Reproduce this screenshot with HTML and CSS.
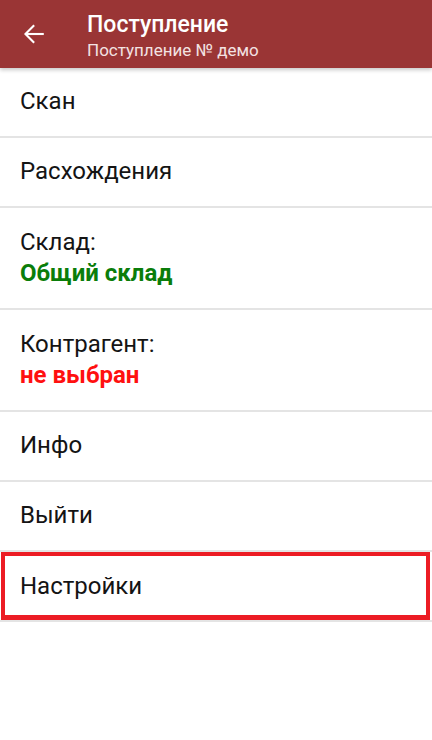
FILE: index.html
```html
<!DOCTYPE html>
<html lang="ru">
<head>
<meta charset="utf-8">
<title>Поступление</title>
<link rel="stylesheet" href="styles.css">
</head>
<body>
<div class="screen">
  <header class="appbar">
    <button class="back" aria-label="Назад">
      <svg width="28" height="28" viewBox="0 0 24 24" fill="none" stroke="#ffffff" stroke-width="1.8" stroke-linecap="square">
        <path d="M19.5 12H5.2"/>
        <path d="M11.5 5.2L4.7 12l6.8 6.8"/>
      </svg>
    </button>
    <div class="titles">
      <div class="title">Поступление</div>
      <div class="subtitle">Поступление № демо</div>
    </div>
  </header>
  <ul class="menu">
    <li class="item">Скан</li>
    <li class="item">Расхождения</li>
    <li class="item item-tall">
      <span>Склад:</span>
      <span class="value value-ok">Общий склад</span>
    </li>
    <li class="item item-tall">
      <span>Контрагент:</span>
      <span class="value value-missing">не выбран</span>
    </li>
    <li class="item">Инфо</li>
    <li class="item">Выйти</li>
    <li class="item item-selected">Настройки</li>
  </ul>
</div>
</body>
</html>
```

FILE: styles.css
```css
* {
  box-sizing: border-box;
}

html, body {
  margin: 0;
  padding: 0;
  background: #ffffff;
}

body {
  font-family: Roboto, "Noto Sans", sans-serif;
  color: #111111;
}

.screen {
  width: 432px;
  min-height: 740px;
  display: flex;
  flex-direction: column;
}

.appbar {
  position: relative;
  z-index: 1;
  height: 68px;
  background: #9a3535;
  display: flex;
  align-items: flex-start;
  box-shadow: 0 2px 4px rgba(0, 0, 0, 0.22);
}

.back {
  margin: 20px 0 0 20px;
  padding: 0;
  width: 28px;
  height: 28px;
  border: none;
  background: none;
  display: flex;
}

.titles {
  margin-left: 39px;
  display: flex;
  flex-direction: column;
}

.title {
  margin-top: 10px;
  font-size: 23px;
  line-height: 29px;
  font-weight: 500;
  color: #ffffff;
}

.subtitle {
  margin-top: 1px;
  font-size: 17px;
  line-height: 20px;
  color: #f3e2e2;
}

.menu {
  list-style: none;
  margin: 0;
  padding: 0;
}

.item {
  height: 70px;
  padding: 0 20px 2px;
  border-bottom: 2px solid #e4e4e4;
  display: flex;
  flex-direction: column;
  justify-content: center;
  font-size: 24px;
  line-height: 31px;
  color: #141414;
}

.item-tall {
  height: 102px;
  padding-bottom: 0;
}

.value {
  font-weight: 700;
}

.value-ok {
  color: #0a7d0a;
}

.value-missing {
  color: #ff1010;
}

.item-selected {
  position: relative;
  padding-bottom: 0;
}

.item-selected::after {
  content: "";
  position: absolute;
  left: 1px;
  right: 2px;
  top: 0;
  bottom: 0;
  border: 4px solid #ec1c24;
  border-bottom-width: 5px;
}
```
